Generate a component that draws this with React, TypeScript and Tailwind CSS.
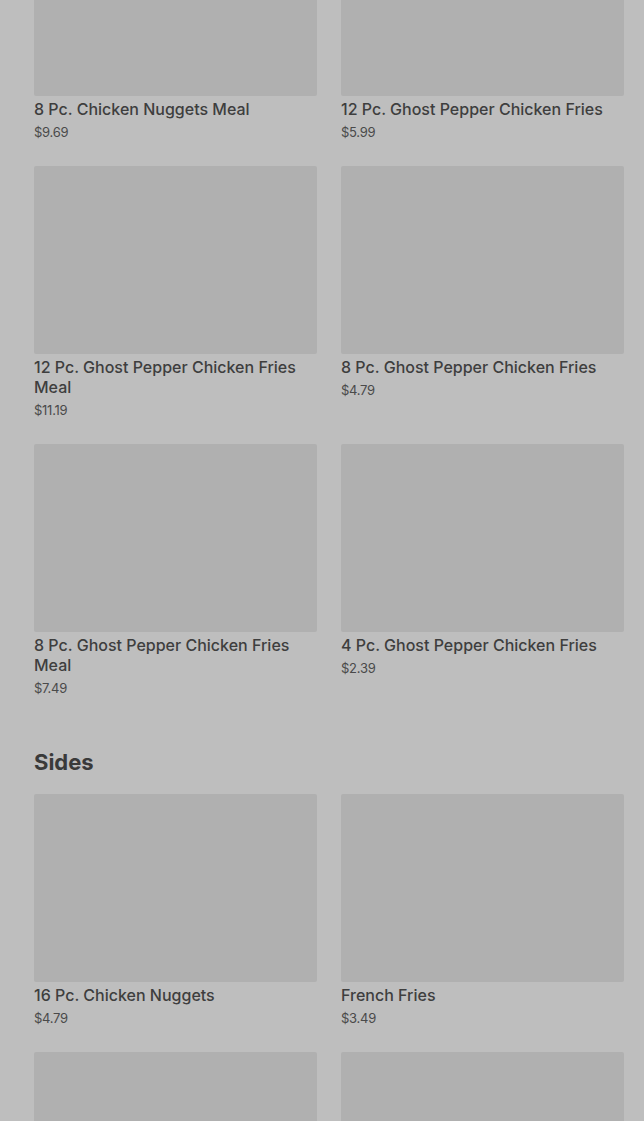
import React from 'react'

interface Item {
  name: string
  price: string
}

const topItems: Item[] = [
  { name: '8 Pc. Chicken Nuggets Meal', price: '$9.69' },
  { name: '12 Pc. Ghost Pepper Chicken Fries', price: '$5.99' },
  { name: '12 Pc. Ghost Pepper Chicken Fries Meal', price: '$11.19' },
  { name: '8 Pc. Ghost Pepper Chicken Fries', price: '$4.79' },
  { name: '8 Pc. Ghost Pepper Chicken Fries Meal', price: '$7.49' },
  { name: '4 Pc. Ghost Pepper Chicken Fries', price: '$2.39' },
]

const sides: Item[] = [
  { name: '16 Pc. Chicken Nuggets', price: '$4.79' },
  { name: 'French Fries', price: '$3.49' },
]

function MenuCard({ item }: { item?: Item }) {
  return (
    <div className="flex flex-col">
      <div className="h-[188px] w-full rounded-[2px] bg-[#b0b0b0]" />
      {item && (
        <>
          <p className="mt-[3px] pr-2 text-[16px] leading-5 font-medium text-[#3e3e3e]">{item.name}</p>
          <p className="mt-[3px] text-[13px] leading-5 tracking-[-0.02em] text-[#4a4a4a]">{item.price}</p>
        </>
      )}
    </div>
  )
}

export default function App() {
  return (
    <div
      className="h-[1121px] overflow-hidden bg-[#bebebe] pl-[34px] pr-[20px]"
      style={{ fontFamily: 'Inter, "Noto Sans", sans-serif' }}
    >
      <div className="-mt-[92px] grid grid-cols-2 gap-6">
        {topItems.map((item) => (
          <MenuCard key={item.name} item={item} />
        ))}
      </div>

      <h2 className="mt-12 mb-4 text-[22px] leading-8 font-bold text-[#3a3a3a]">Sides</h2>

      <div className="grid grid-cols-2 gap-6">
        {sides.map((item) => (
          <MenuCard key={item.name} item={item} />
        ))}
        <MenuCard />
        <MenuCard />
      </div>
    </div>
  )
}
